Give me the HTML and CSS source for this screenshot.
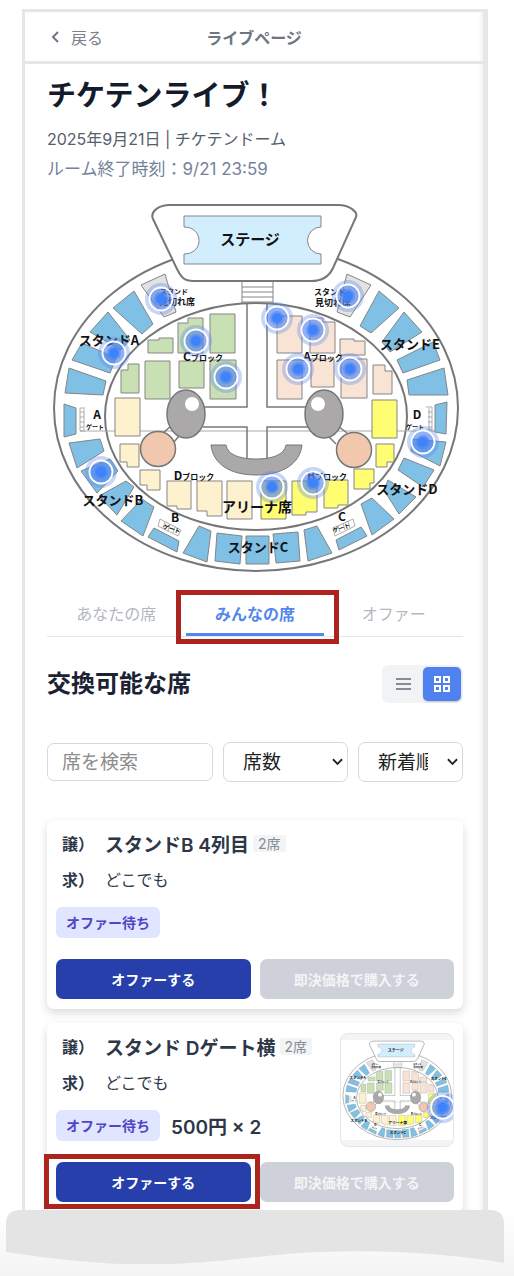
FILE: index.html
```html
<!DOCTYPE html>
<html lang="ja">
<head>
    <meta charset="UTF-8">
    <meta name="viewport" content="width=device-width, initial-scale=1.0">
    <title>ライブページ</title>
    <link rel="stylesheet" href="styles.css">
</head>
<body>
    <!-- Shared drawings: seat map and seat pin -->
    <svg class="defs" width="0" height="0" aria-hidden="true">
        <defs>
            <g id="pin">
                <circle r="16" fill="#5b86ea" fill-opacity="0.35"/>
                <circle r="11.5" fill="#4f80ee" fill-opacity="0.45" stroke="#fff" stroke-width="1.8"/>
                <circle r="7" fill="#3f83fb" fill-opacity="0.5"/>
                <circle r="5" fill="#3f83fb"/>
            </g>
            <g id="seatMap" stroke="#858585" stroke-width="1">
                <g fill="#fff" stroke="#777" stroke-width="2">
                    <ellipse cx="256" cy="408" rx="202" ry="163"/>
                    <ellipse cx="256" cy="416.500" rx="151" ry="113.500"/>
                    <path d="M170 205H338C350 205 358 212 356 217L333 268C329 277 322 281 311 281H193C184 281 181 277 177 269L153 219C150 212 158 205 170 205Z"/>
                </g>
                <path d="M184 216H321V227A13.500 13.500 0 0 0 321 254V264H184V254C204 254 204 227 184 227Z" fill="#d2eefc"/>
                <path d="M242 282V303M273 282V303M242 287H273M242 292H273M242 297H273M242 302H273" fill="none"/>
                <path d="M80 431H440" fill="none" stroke="#aaa"/>
                <path d="M247 303V407H203M267 303V407H308M203 427H247V462M308 427H267V462M163 433L171 426M174 442L179 436M347 433L338 426M336 444L328 436" fill="none" stroke="#777" stroke-width="1.500"/>

                <!-- Stand -->
                <g fill="#7fc0e4">
                    <path d="M113 308L134 291L153 324L142 334Z"/>
                    <path d="M90 332L108 312L130 340L121 350Z"/>
                    <path d="M82 343L116 358L110 373L72 360Z"/>
                    <path d="M69 368L106 381L103 395L65 393Z"/>
                    <path d="M64 404L76 408V434L64 437Z"/>
                    <path d="M69 443L100 439L104 451L77 468Z"/>
                    <path d="M81 471L110 459L118 471L97 493Z"/>
                    <path d="M99 496L126 481L134 487L117 515Z"/>
                    <path d="M142 499L154 507L143 536L121 521Z"/>
                    <path d="M154 528L179 541L177 552L148 537Z"/>
                    <path d="M199 526L211 531L207 562L183 553Z"/>
                    <path d="M217 533L242 536L240 564L215 561Z"/>
                    <path d="M246 536H269V564H246Z"/>
                    <path d="M273 534L298 532L300 561L276 563Z"/>
                    <path d="M304 530L317 526L332 553L308 561Z"/>
                    <path d="M336 540L361 527L367 536L339 550Z"/>
                    <path d="M361 504L372 498L394 519L372 535Z"/>
                    <path d="M388 480L416 497L399 514L384 490Z"/>
                    <path d="M404 458L434 470L423 487L398 470Z"/>
                    <path d="M412 439L446 442L440 466L411 451Z"/>
                    <path d="M447 402L446 434L435 432V405Z"/>
                    <path d="M407 380L444 368L448 395H409Z"/>
                    <path d="M397 360L433 342L440 360L403 373Z"/>
                    <path d="M404 312L422 332L390 352L382 342Z"/>
                    <path d="M379 291L399 308L371 333L360 326Z"/>
                </g>
                <path d="M141 285L165 274L176 312L164 317ZM347 274L371 285L350 317L337 312Z" fill="#e2e2e2"/>

                <!-- C block -->
                <g fill="#c8e0b4">
                    <path d="M148 340H159V338H173V353H148Z"/>
                    <path d="M178 323H188V318H203V353H178Z"/>
                    <path d="M210 314H235V353H210Z"/>
                    <path d="M121 370H128V364H139V393H121Z"/>
                    <path d="M145 361H170V399H145Z"/>
                    <path d="M179 361H204V388H179Z"/>
                    <path d="M210 360H236V399H210Z"/>
                </g>
                <!-- A block -->
                <g fill="#f9e3d5">
                    <path d="M277 316H302V353H277Z"/>
                    <path d="M310 318H323V322H335V353H310Z"/>
                    <path d="M340 339H354V341H365V355H340Z"/>
                    <path d="M277 360H302V399H277Z"/>
                    <path d="M311 359H334V387H311Z"/>
                    <path d="M341 359H367V398H341Z"/>
                    <path d="M373 365H385V371H392V394H373Z"/>
                </g>
                <!-- D block -->
                <g fill="#fef1ce">
                    <path d="M115 398H140V436H115Z"/>
                    <path d="M120 444H139V467H127V462H120Z"/>
                    <path d="M140 470H160V490H147V485H140Z"/>
                    <path d="M167 481H191V509H177V506H167Z"/>
                    <path d="M197 481H222V516H207V511H197Z"/>
                    <path d="M227 481H252V519H227Z"/>
                </g>
                <!-- B block -->
                <g fill="#fffd72">
                    <path d="M372 400H397V438H372Z"/>
                    <path d="M376 444H394V462H387V467H376Z"/>
                    <path d="M354 469H374V483H370V489H354Z"/>
                    <path d="M261 481H286V519H261Z"/>
                    <path d="M292 481H317V512H306V515H292Z"/>
                    <path d="M324 480H348V505H338V508H324Z"/>
                </g>

                <!-- Face -->
                <g stroke="#777" stroke-width="1.500">
                    <ellipse cx="186" cy="414" rx="19" ry="24" fill="#aaa8a8"/>
                    <ellipse cx="324" cy="414" rx="19" ry="24" fill="#aaa8a8"/>
                    <circle cx="158" cy="449" r="17.500" fill="#f1c8ae"/>
                    <circle cx="354" cy="450" r="17.500" fill="#f1c8ae"/>
                    <path d="M211 445H226C228 455 240 459 256 459C272 459 284 455 286 445H302C300 464 282 475 256 475C230 475 213 464 211 445Z" fill="#aaa8a8" stroke-width="1"/>
                </g>
                <circle cx="192" cy="404" r="7" fill="#fff" stroke="none"/>
                <circle cx="318" cy="404" r="7" fill="#fff" stroke="none"/>

                <!-- Gate stairs -->
                <g fill="#fff" stroke="#999" stroke-width="0.800">
                    <path d="M80 408H85M80 431H85M80 408V431M84 409V430M80 412H84M80 417H84M80 422H84M80 427H84"/>
                    <path d="M426 407H432V430H426M429 408V430M428 412H432M428 417H432M428 422H432M428 427H432"/>
                    <path d="M160 519L181 530L178 536L158 526ZM165 522L163 528M170 524L168 531M175 527L173 533"/>
                    <path d="M333 528L353 519L355 526L335 536ZM338 526L340 532M343 523L345 530M348 521L350 528"/>
                </g>

                <g class="map-text" stroke="none">
                    <text x="250" y="245" font-size="15">ステージ</text>
                    <text x="174" y="294" font-size="7">スタンド</text>
                    <text x="177" y="305" font-size="9">見切れ席</text>
                    <text x="330" y="295" font-size="8">スタンド</text>
                    <text x="333" y="306" font-size="9">見切れ席</text>
                    <text x="109" y="345" font-size="13">スタンドA</text>
                    <text x="410" y="349" font-size="13">スタンドE</text>
                    <text x="113" y="505" font-size="13">スタンドB</text>
                    <text x="407" y="494" font-size="13">スタンドD</text>
                    <text x="258" y="552" font-size="13">スタンドC</text>
                    <text x="257" y="512" font-size="14">アリーナ席</text>
                    <text x="203" y="361" font-size="8"><tspan font-size="12">C</tspan>ブロック</text>
                    <text x="323" y="361" font-size="8"><tspan font-size="12">A</tspan>ブロック</text>
                    <text x="194" y="480" font-size="8"><tspan font-size="12">D</tspan>ブロック</text>
                    <text x="327" y="480" font-size="8"><tspan font-size="12">B</tspan>ブロック</text>
                    <text x="97" y="419" font-size="12">A</text>
                    <text x="95" y="429" font-size="6">ゲート</text>
                    <text x="417" y="419" font-size="12">D</text>
                    <text x="415" y="429" font-size="6">ゲート</text>
                    <text x="175" y="522" font-size="12">B</text>
                    <text x="171" y="531" font-size="6" transform="rotate(18 171 531)">ゲート</text>
                    <text x="342" y="521" font-size="12">C</text>
                    <text x="342" y="530" font-size="6" transform="rotate(-18 342 530)">ゲート</text>
                </g>
            </g>
        </defs>
    </svg>

    <div class="phone">
        <header class="topbar">
            <a href="#" class="back">
                <svg class="back-icon" viewBox="0 0 8 14" aria-hidden="true"><path d="M7 2L2 7L7 12"/></svg>
                戻る
            </a>
            <span class="topbar-title">ライブページ</span>
        </header>

        <main class="content">
            <h1>チケテンライブ！</h1>
            <p class="meta">2025年9月21日 | チケテンドーム</p>
            <p class="meta meta-end">ルーム終了時刻：9/21 23:59</p>

            <svg class="seat-map" viewBox="47 195 416 385" role="img" aria-label="座席表">
                <use href="#seatMap"/>
                <use href="#pin" x="161" y="299"/>
                <use href="#pin" x="114" y="353"/>
                <use href="#pin" x="196" y="341"/>
                <use href="#pin" x="226" y="377"/>
                <use href="#pin" x="348" y="296"/>
                <use href="#pin" x="277" y="318"/>
                <use href="#pin" x="313" y="330"/>
                <use href="#pin" x="298" y="369"/>
                <use href="#pin" x="350" y="369"/>
                <use href="#pin" x="101" y="472"/>
                <use href="#pin" x="423" y="442"/>
                <use href="#pin" x="272" y="487"/>
                <use href="#pin" x="313" y="483"/>
            </svg>

            <nav class="tabs">
                <button type="button" class="tab">あなたの席</button>
                <div class="marked">
                    <button type="button" class="tab active">みんなの席</button>
                    <span class="mark mark-tab"></span>
                </div>
                <button type="button" class="tab">オファー</button>
            </nav>

            <div class="list-head">
                <h2>交換可能な席</h2>
                <div class="view-toggle">
                    <button type="button" class="view-btn" aria-label="リスト表示">
                        <svg viewBox="0 0 18 18" aria-hidden="true"><path d="M2 4H17M2 9H17M2 14H17"/></svg>
                    </button>
                    <button type="button" class="view-btn selected" aria-label="グリッド表示">
                        <svg viewBox="0 0 18 18" aria-hidden="true"><path d="M2 2H7V7H2ZM11 2H16V7H11ZM2 11H7V16H2ZM11 11H16V16H11Z"/></svg>
                    </button>
                </div>
            </div>

            <form class="filters">
                <input type="text" placeholder="席を検索" aria-label="席を検索">
                <div class="select-box">
                    <select aria-label="席数"><option>席数</option></select>
                    <svg class="arrow" viewBox="0 0 12 8" aria-hidden="true"><path d="M1 1L6 6L11 1"/></svg>
                </div>
                <div class="select-box">
                    <select aria-label="並び順"><option>新着順</option></select>
                    <svg class="arrow" viewBox="0 0 12 8" aria-hidden="true"><path d="M1 1L6 6L11 1"/></svg>
                </div>
            </form>

            <section class="cards">
                <article class="card">
                    <div class="card-body">
                        <div class="card-info">
                            <div class="row">
                                <span class="row-label">譲）</span>
                                <span class="seat-name">スタンドB 4列目</span>
                                <span class="count">2席</span>
                            </div>
                            <div class="row">
                                <span class="row-label">求）</span>
                                <span class="wish">どこでも</span>
                            </div>
                            <div class="status">
                                <span class="tag">オファー待ち</span>
                            </div>
                        </div>
                    </div>
                    <div class="actions">
                        <button type="button" class="btn">オファーする</button>
                        <button type="button" class="btn" disabled>即決価格で購入する</button>
                    </div>
                </article>

                <article class="card">
                    <div class="card-body">
                        <div class="card-info">
                            <div class="row">
                                <span class="row-label">譲）</span>
                                <span class="seat-name">スタンド Dゲート横</span>
                                <span class="count">2席</span>
                            </div>
                            <div class="row">
                                <span class="row-label">求）</span>
                                <span class="wish">どこでも</span>
                            </div>
                            <div class="status">
                                <span class="tag">オファー待ち</span>
                                <span class="price">500円 × 2</span>
                            </div>
                        </div>
                        <div class="thumb">
                            <svg viewBox="47 201 416 373" role="img" aria-label="席の位置">
                                <use href="#seatMap"/>
                                <use href="#pin" transform="translate(424 451) scale(3.700)"/>
                            </svg>
                        </div>
                    </div>
                    <div class="actions">
                        <div class="marked">
                            <button type="button" class="btn">オファーする</button>
                            <span class="mark mark-btn"></span>
                        </div>
                        <button type="button" class="btn" disabled>即決価格で購入する</button>
                    </div>
                </article>
            </section>
        </main>
    </div>

    <svg class="wave" viewBox="0 0 498 54" preserveAspectRatio="none" aria-hidden="true">
        <path d="M0 14Q0 0 14 0H484Q498 0 498 14V53C430 42 350 37 260 46C170 56 120 60 0 42Z"/>
    </svg>
</body>
</html>
```

FILE: styles.css
```css
* {
    box-sizing: border-box;
}

body {
    margin: 0;
    padding-top: 9px;
    min-height: 100vh;
    overflow-x: hidden;
    font-family: Inter, "Noto Sans CJK JP", sans-serif;
    color: #2d3748;
    background: linear-gradient(to top, #f4f4f4, #fff 66px);
}

h1, h2, p {
    margin: 0;
}

button, input, select {
    font-family: inherit;
    margin: 0;
}

button {
    border: none;
    padding: 0;
    cursor: pointer;
}

.defs {
    position: absolute;
}

.phone {
    margin: 0 26px 0 22px;
    height: calc(100vh - 75px);
    min-height: 1201px;
    overflow: hidden;
    background-color: #fff;
    border: 3px solid #e6e6e6;
    border-right-width: 5px;
    border-bottom: none;
    box-shadow: inset -3px 0 3px #f5f5f5;
}

/* Top bar */
.topbar {
    display: grid;
    grid-template-columns: 1fr auto 1fr;
    align-items: center;
    height: 52px;
    padding: 0 26px;
    border-bottom: 3px solid #e6e6e6;
    font-size: 16px;
    color: #6f7582;
}

.back {
    display: flex;
    align-items: center;
    gap: 12px;
    color: #7c818d;
    text-decoration: none;
}

.back-icon {
    width: 8px;
    height: 14px;
    fill: none;
    stroke: #6f7582;
    stroke-width: 2;
}

.topbar-title {
    font-weight: 600;
}

.content {
    padding: 14px 20px 20px 22px;
}

h1 {
    margin-bottom: 11px;
    font-size: 29px;
    line-height: 35px;
    font-weight: 600;
    color: #141b2d;
}

.meta {
    font-size: 16px;
    line-height: 30px;
    color: #555e6c;
}

.meta-end {
    font-size: 17px;
    color: #74829b;
}

.seat-map {
    display: block;
    width: 100%;
    margin-top: 11px;
}

.map-text {
    fill: #111;
    font-family: "Noto Sans CJK JP", sans-serif;
    font-weight: 700;
    text-anchor: middle;
}

/* Tabs */
.tabs {
    display: grid;
    grid-template-columns: repeat(3, 1fr);
    margin-top: 12px;
    border-bottom: 1px solid #e5e7eb;
}

.tab {
    width: 100%;
    height: 44px;
    border-bottom: 3px solid transparent;
    background: none;
    font-size: 16px;
    color: #b3b7c0;
}

.tab.active {
    border-bottom-color: #5387ee;
    font-weight: 600;
    color: #5387ee;
}

.marked {
    position: relative;
}

.mark {
    position: absolute;
    border: 5px solid #ab241d;
    pointer-events: none;
}

.mark-tab {
    inset: -2px -15px -8px -10px;
}

.mark-btn {
    inset: -8px -9px -7px -12px;
}

/* List heading */
.list-head {
    display: flex;
    justify-content: space-between;
    align-items: center;
    margin-top: 28px;
}

h2 {
    font-size: 24px;
    line-height: 38px;
    font-weight: 600;
    color: #1a2233;
}

.view-toggle {
    display: flex;
    gap: 1px;
    padding: 2px;
    border-radius: 6px;
    background-color: #f1f3f5;
}

.view-btn {
    display: flex;
    align-items: center;
    justify-content: center;
    width: 38px;
    height: 34px;
    border-radius: 5px;
    background: none;
    color: #858b97;
}

.view-btn svg {
    width: 18px;
    height: 18px;
    fill: none;
    stroke: currentColor;
    stroke-width: 2;
}

.view-btn.selected {
    background-color: #4f82ee;
    color: #fff;
    box-shadow: 0 1px 2px rgba(0, 0, 0, 0.2);
}

/* Filters */
.filters {
    display: grid;
    grid-template-columns: 1fr 125px 105px;
    align-items: center;
    gap: 10px;
    margin-top: 39px;
}

.filters input, .filters select {
    width: 100%;
    border: 1px solid #d5d8de;
    border-radius: 7px;
    background-color: #fff;
    font-size: 19px;
    color: #1f1f1f;
}

.filters input {
    height: 38px;
    padding: 0 14px;
}

.filters input::placeholder {
    color: #8c8c8c;
}

.select-box {
    position: relative;
}

.filters select {
    display: block;
    height: 40px;
    padding: 0 34px 0 19px;
    appearance: none;
}

.arrow {
    position: absolute;
    right: 5px;
    top: 16px;
    width: 11px;
    height: 8px;
    fill: none;
    stroke: #222;
    stroke-width: 2;
    pointer-events: none;
}

/* Cards */
.cards {
    display: flex;
    flex-direction: column;
    gap: 14px;
    margin-top: 38px;
}

.card {
    padding: 10px 9px;
    border-radius: 7px;
    background-color: #fff;
    box-shadow: 0 4px 10px rgba(0, 0, 0, 0.15);
}

.card-body {
    display: flex;
    justify-content: space-between;
    min-height: 114px;
    margin-bottom: 15px;
}

.row {
    display: flex;
    align-items: center;
    height: 26px;
    margin-bottom: 10px;
    padding-left: 6px;
}

.row-label {
    width: 43px;
    font-size: 16px;
    font-weight: 600;
}

.seat-name, .price {
    font-size: 19px;
    font-weight: 600;
}

.wish {
    font-size: 16px;
}

.count {
    margin-left: 4px;
    padding: 0 5px;
    border-radius: 2px;
    background-color: #f3f4f6;
    font-size: 14px;
    line-height: 17px;
    color: #858b97;
}

.status {
    display: flex;
    align-items: center;
    gap: 11px;
    margin-top: 15px;
}

.tag {
    padding: 0 10px;
    border-radius: 6px;
    background-color: #e0e6ff;
    font-size: 14px;
    line-height: 31px;
    font-weight: 600;
    color: #5145c6;
}

.thumb {
    display: flex;
    align-items: center;
    width: 114px;
    height: 114px;
    border: 1px solid #e3e5e9;
    border-radius: 8px;
    background-color: #f3f4f6;
    overflow: hidden;
}

.thumb svg {
    width: 100%;
    background-color: #fff;
}

.actions {
    display: grid;
    grid-template-columns: 1fr 1fr;
    gap: 9px;
}

.btn {
    display: block;
    width: 100%;
    height: 40px;
    border-radius: 7px;
    background-color: #263faa;
    font-size: 14px;
    font-weight: 600;
    color: #fff;
}

.btn:disabled {
    background-color: #ced1d9;
    color: #f3f4f6;
    cursor: default;
}

/* Torn bottom edge */
.wave {
    display: block;
    position: relative;
    width: calc(100% - 16px);
    height: 54px;
    margin-left: 6px;
    fill: #e4e4e4;
}
```
